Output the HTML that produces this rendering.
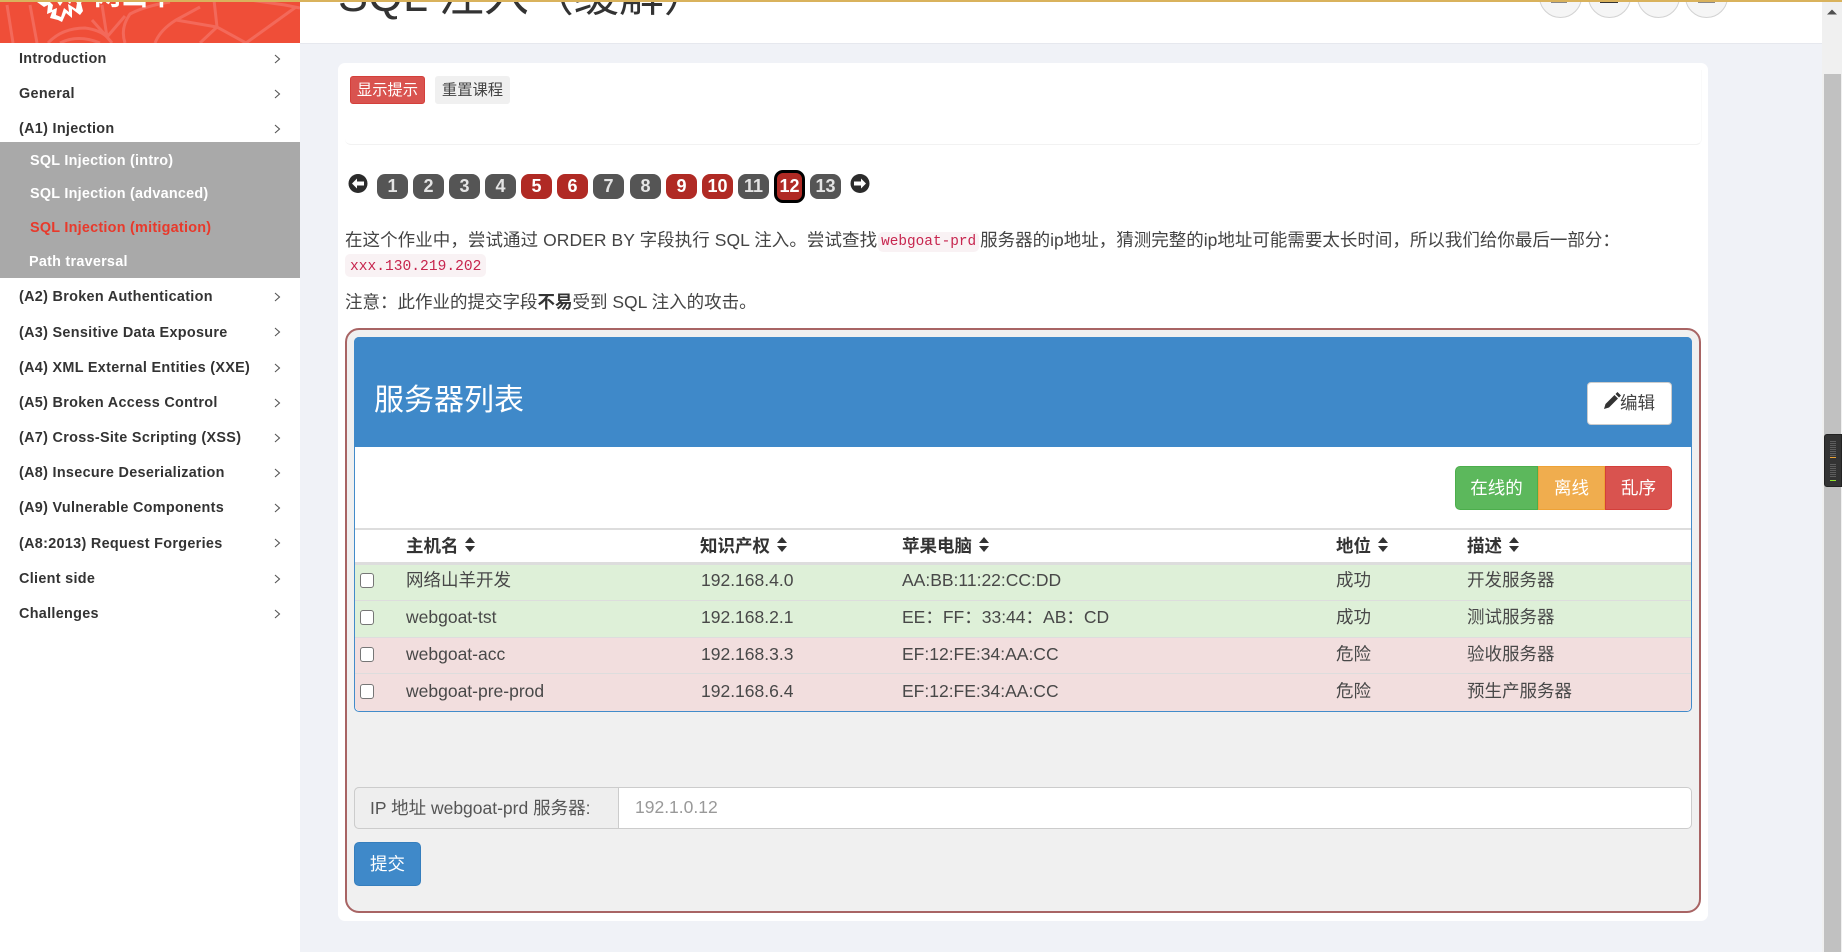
<!DOCTYPE html>
<html lang="zh"><head><meta charset="utf-8"><title>SQL 注入（缓解）</title>
<style>
*{box-sizing:border-box}
html,body{margin:0;padding:0;width:1842px;height:952px;overflow:hidden;background:#f0f2f7;font-family:"Liberation Sans","Noto Sans CJK SC",sans-serif;color:#444;font-size:17.5px}
.a{position:absolute;white-space:nowrap}
.nav{position:absolute;left:19px;margin-top:.5px;font-size:14.4px;font-weight:bold;color:#333;line-height:20px;white-space:nowrap;letter-spacing:.31px}
.sub{position:absolute;margin-top:.5px;font-size:14.4px;font-weight:bold;color:#fff;line-height:20px;white-space:nowrap;letter-spacing:.25px}
.pg{position:absolute;top:174px;width:31px;height:25px;border-radius:8px;background:#555;color:#e4e4e4;font:bold 18px/25px "Liberation Sans",sans-serif;text-align:center}
.pg.r{background:#b02a24;color:#fff}
.circ{position:absolute;top:-25px;width:43px;height:43px;border-radius:50%;background:#f5f5f5;border:1.5px solid #d2d2d2}
code{font-family:"Liberation Mono",monospace;font-size:14.4px;color:#c7254e;background:#f9f2f4;border-radius:5px}
.row{position:absolute;left:355px;width:1336px;height:37px;border-bottom:1px solid #ddd}
.c{position:absolute;line-height:36px;white-space:nowrap;color:#484848}
.th{position:absolute;top:530px;line-height:32px;font-weight:bold;color:#333;white-space:nowrap}
.cb{position:absolute;left:360px;width:14px;height:15px;border:1px solid #767676;border-radius:3px;background:#fff}
.btn{position:absolute;color:#fff;text-align:center;font-size:17.5px}
</style></head>
<body>
<!-- header -->
<div class="a" style="left:0;top:0;width:1842px;height:44px;background:#fff;border-bottom:1px solid #e6e8ee"></div>
<div class="a" style="left:338px;top:-34px;font-size:45px;line-height:60px;color:#333">SQL 注入（缓解）</div>
<div class="circ" style="left:1539px"></div>
<div class="circ" style="left:1588px"></div>
<div class="circ" style="left:1637px"></div>
<div class="circ" style="left:1685px"></div>
<div class="a" style="left:1551px;top:0;width:16px;height:3px;background:#888"></div>
<div class="a" style="left:1600px;top:0;width:18px;height:3px;border:1px solid #333;border-top:0;background:#fff"></div>
<div class="a" style="left:1655px;top:0;width:6px;height:2px;background:#888"></div>
<div class="a" style="left:1698px;top:0;width:17px;height:3px;background:#888"></div>

<!-- logo -->
<svg class="a" style="left:0;top:0" width="300" height="43" viewBox="0 0 300 43">
<rect width="300" height="43" fill="#ef4e38"/>
<g fill="none" stroke="#f3695a" stroke-width="3">
<path d="M7 5 L13 43M30 5 L37 43"/>
<path d="M102 5 L107 37M107 37 L92 20M107 37 L125 16M107 37 L112 43"/>
<path d="M48 43 Q62 28 85 28 Q100 30 107 37M60 43 Q78 34 100 43M125 43 Q120 28 130 14 Q145 6 170 2M155 43 Q160 30 176 20 L200 7"/>
<path d="M176 20 L217 27 L246 43M217 27 L200 43M217 27 L214 0M246 43 L296 7"/>
<path d="M250 0 L285 5 L300 8"/>
</g>
<path d="M37 2 L44 7 L48 5 L47 14 L52 12 L50 18 L58 20 L62 22 L66 13 L72 18 L72 9 L80 15 L83 11 L81 3 L83 0 L37 0 Z" fill="#fff"/>
<path d="M48 0 L53 5 L52 10 L57 8 L56 15 L61 17 L64 8 L69 12 L68 4 L76 9 L77 3 L74 0 Z" fill="#ef4e38"/>
<path d="M56 0 L60 6 L64 0 Z M66 0 L70 4 L72 0 Z" fill="#fff"/>
<text x="94" y="5" font-size="27" font-weight="bold" fill="#fff" font-family="Liberation Sans,Noto Sans CJK SC,sans-serif">网山羊</text>
</svg>
<div class="a" style="left:0;top:0;width:1842px;height:1.5px;background:#d9b25c;z-index:5"></div>

<!-- sidebar -->
<div class="a" style="left:0;top:43px;width:300px;height:909px;background:#fff"></div>
<div class="a" style="left:0;top:142px;width:300px;height:136px;background:#a9a9a9"></div>
<div class="nav" style="top:48px">Introduction</div>
<div class="nav" style="top:83px">General</div>
<div class="nav" style="top:118px">(A1) Injection</div>
<div class="sub" style="left:30px;top:150px">SQL Injection (intro)</div>
<div class="sub" style="left:30px;top:183px">SQL Injection (advanced)</div>
<div class="sub" style="left:30px;top:217px;color:#e8392b">SQL Injection (mitigation)</div>
<div class="sub" style="left:29px;top:251px">Path traversal</div>
<div class="nav" style="top:286px">(A2) Broken Authentication</div>
<div class="nav" style="top:322px">(A3) Sensitive Data Exposure</div>
<div class="nav" style="top:357px">(A4) XML External Entities (XXE)</div>
<div class="nav" style="top:392px">(A5) Broken Access Control</div>
<div class="nav" style="top:427px">(A7) Cross-Site Scripting (XSS)</div>
<div class="nav" style="top:462px">(A8) Insecure Deserialization</div>
<div class="nav" style="top:497px">(A9) Vulnerable Components</div>
<div class="nav" style="top:533px">(A8:2013) Request Forgeries</div>
<div class="nav" style="top:568px">Client side</div>
<div class="nav" style="top:603px">Challenges</div>
<svg class="a" style="left:0;top:0" width="300" height="640" fill="none" stroke="#555" stroke-width="1.1">
<path d="M275 55l4.500 4-4.500 4M275 90l4.500 4-4.500 4M275 125l4.500 4-4.500 4M275 293l4.500 4-4.500 4M275 328l4.500 4-4.500 4M275 364l4.500 4-4.500 4M275 399l4.500 4-4.500 4M275 434l4.500 4-4.500 4M275 469l4.500 4-4.500 4M275 504l4.500 4-4.500 4M275 539l4.500 4-4.500 4M275 575l4.500 4-4.500 4M275 610l4.500 4-4.500 4"/>
</svg>

<!-- card -->
<div class="a" style="left:338px;top:63px;width:1370px;height:858px;background:#fff;border-radius:7px"></div>
<div class="a" style="left:345px;top:70px;width:1357px;height:75px;border-bottom:1px solid #f2f2f2;border-right:1px solid #fafafa;border-radius:0 0 6px 6px"></div>
<div class="btn" style="left:350px;top:76px;width:75px;height:28px;background:#d9534f;border:1px solid #d43f3a;border-radius:3px;font-size:15.300px;line-height:28px">显示提示</div>
<div class="btn" style="left:435px;top:76px;width:75px;height:28px;background:#f0f0f0;border-radius:3px;font-size:15.300px;line-height:30px;color:#444">重置课程</div>

<!-- pagination -->
<svg class="a" style="left:347px;top:173px" width="22" height="21" viewBox="0 0 22 21"><circle cx="11" cy="10.500" r="9.500" fill="#2b2b2b"/><path d="M5 10.500l5-5v3h7v4h-7v3z" fill="#fff"/></svg>
<div class="pg" style="left:377px">1</div><div class="pg" style="left:413px">2</div><div class="pg" style="left:449px">3</div><div class="pg" style="left:485px">4</div>
<div class="pg r" style="left:521px">5</div><div class="pg r" style="left:557px">6</div><div class="pg" style="left:593px">7</div><div class="pg" style="left:630px">8</div>
<div class="pg r" style="left:666px">9</div><div class="pg r" style="left:702px">10</div><div class="pg" style="left:738px">11</div>
<div class="pg r" style="left:774px;top:170px;height:33px;border:3px solid #000;width:31px;line-height:27px;border-radius:9px">12</div>
<div class="pg" style="left:810px">13</div>
<svg class="a" style="left:849px;top:173px" width="22" height="21" viewBox="0 0 22 21"><circle cx="11" cy="10.500" r="9.500" fill="#2b2b2b"/><path d="M17 10.500l-5-5v3H5v4h7v3z" fill="#fff"/></svg>

<!-- text -->
<div class="a" style="left:345px;top:228px;line-height:24px;font-size:17.500px"><span style="letter-spacing:.06px">在这个作业中，尝试通过 ORDER BY 字段执行 SQL 注入。尝试查找</span><code style="padding:2px 3px;margin:0 1px;position:relative;top:-1px">webgoat-prd</code>服务器的ip地址，猜测完整的ip地址可能需要太长时间，所以我们给你最后一部分：</div>
<div class="a" style="left:345px;top:254px;height:23px"><code style="display:block;padding:0 5px;height:23px;line-height:26px;font-size:14.600px">xxx.130.219.202</code></div>
<div class="a" style="left:345px;top:290px;line-height:24px;font-size:17.500px">注意：此作业的提交字段<b style="color:#333">不易</b>受到 SQL 注入的攻击。</div>

<!-- attack container -->
<div class="a" style="left:345px;top:328px;width:1356px;height:585px;background:#f0f0f0;border:2px solid #a86464;border-radius:14px"></div>
<div class="a" style="left:354px;top:337px;width:1338px;height:375px;background:#fff;border:1px solid #428bca;border-radius:5px"></div>
<div class="a" style="left:354px;top:337px;width:1338px;height:110px;background:#3f89c9;border-radius:5px 5px 0 0"></div>
<div class="a" style="left:374px;top:380px;font-size:30px;line-height:42px;color:#fff">服务器列表</div>
<div class="btn" style="left:1587px;top:382px;width:85px;height:43px;background:#fff;border:1px solid #ccc;border-radius:4px;color:#444;line-height:41px;text-align:left;padding-left:32px">编辑</div>
<svg class="a" style="left:1603px;top:391px" width="20" height="20" viewBox="0 0 20 20"><path d="M1 18l1.500-5 9-9 3.500 3.500-9 9zM12.500 3l2-2 3.500 3.500-2 2z" fill="#333"/></svg>
<div class="btn" style="left:1455px;top:466px;width:83px;height:44px;background:#5cb85c;border:1px solid #4cae4c;border-radius:5px 0 0 5px;line-height:42px">在线的</div>
<div class="btn" style="left:1538px;top:466px;width:67px;height:44px;background:#f0ad4e;border:1px solid #eea236;line-height:42px">离线</div>
<div class="btn" style="left:1605px;top:466px;width:67px;height:44px;background:#d9534f;border:1px solid #d43f3a;border-radius:0 5px 5px 0;line-height:42px">乱序</div>

<!-- table -->
<div class="a" style="left:355px;top:528px;width:1336px;height:2px;background:#ddd"></div>
<div class="a" style="left:355px;top:562px;width:1336px;height:3px;background:#ddd"></div>
<div class="th" style="left:406px">主机名</div>
<div class="th" style="left:700px">知识产权</div>
<div class="th" style="left:902px">苹果电脑</div>
<div class="th" style="left:1336px">地位</div>
<div class="th" style="left:1467px">描述</div>
<svg class="a" style="left:0;top:530px" width="1700" height="32" fill="#333">
<path d="M470 7l5 6h-10zM470 22l5-6h-10z"/>
<path d="M782 7l5 6h-10zM782 22l5-6h-10z"/>
<path d="M984 7l5 6h-10zM984 22l5-6h-10z"/>
<path d="M1383 7l5 6h-10zM1383 22l5-6h-10z"/>
<path d="M1514 7l5 6h-10zM1514 22l5-6h-10z"/>
</svg>

<div class="row" style="top:565px;height:36px;background:#def0d8"></div>
<div class="row" style="top:601px;background:#def0d8"></div>
<div class="row" style="top:638px;background:#f2dede;height:36px"></div>
<div class="row" style="top:674px;background:#f2dede;border:0;height:37px;border-radius:0 0 5px 5px"></div>

<div class="cb" style="top:573px"></div><div class="cb" style="top:610px"></div><div class="cb" style="top:647px"></div><div class="cb" style="top:684px"></div>
<div class="c" style="left:406px;top:562px">网络山羊开发</div><div class="c" style="left:701px;top:562px">192.168.4.0</div><div class="c" style="left:902px;top:562px">AA:BB:11:22:CC:DD</div><div class="c" style="left:1336px;top:562px">成功</div><div class="c" style="left:1467px;top:562px">开发服务器</div>
<div class="c" style="left:406px;top:599px">webgoat-tst</div><div class="c" style="left:701px;top:599px">192.168.2.1</div><div class="c" style="left:902px;top:599px">EE：FF：33:44：AB：CD</div><div class="c" style="left:1336px;top:599px">成功</div><div class="c" style="left:1467px;top:599px">测试服务器</div>
<div class="c" style="left:406px;top:636px">webgoat-acc</div><div class="c" style="left:701px;top:636px">192.168.3.3</div><div class="c" style="left:902px;top:636px">EF:12:FE:34:AA:CC</div><div class="c" style="left:1336px;top:636px">危险</div><div class="c" style="left:1467px;top:636px">验收服务器</div>
<div class="c" style="left:406px;top:673px">webgoat-pre-prod</div><div class="c" style="left:701px;top:673px">192.168.6.4</div><div class="c" style="left:902px;top:673px">EF:12:FE:34:AA:CC</div><div class="c" style="left:1336px;top:673px">危险</div><div class="c" style="left:1467px;top:673px">预生产服务器</div>

<!-- form -->
<div class="a" style="left:354px;top:787px;width:1338px;height:42px;background:#fff;border:1px solid #ccc;border-radius:5px"></div>
<div class="a" style="left:354px;top:787px;width:265px;height:42px;background:#eee;border:1px solid #ccc;border-radius:5px 0 0 5px;line-height:40px;padding-left:15px;color:#555">IP 地址 webgoat-prd 服务器:</div>
<div class="a" style="left:635px;top:787px;line-height:40px;color:#999">192.1.0.12</div>
<div class="btn" style="left:354px;top:842px;width:67px;height:44px;background:#3f89c9;border:1px solid #357ebd;border-radius:5px;line-height:42px">提交</div>

<!-- scrollbar -->
<div class="a" style="left:1822px;top:0;width:20px;height:952px;background:#f0f0f0"></div>
<div class="a" style="left:1824px;top:74px;width:17px;height:878px;background:#c1c1c1"></div>
<svg class="a" style="left:1822px;top:6px" width="20" height="12"><path d="M10 3.500l5 5h-10z" fill="#505050"/></svg>
<div class="a" style="left:1824px;top:434px;width:18px;height:53px;background:#333;border-radius:3px 0 0 3px;border:1px solid #222"></div>
<svg class="a" style="left:1830px;top:440px" width="7" height="44">
<g stroke="#5e5e5e" stroke-width="1"><path d="M0 1.500h6M0 3.500h6M0 5.500h6M0 7.500h6M0 9.500h6M0 11.500h6M0 13.500h6M0 15.500h6M0 24.500h6M0 26.500h6M0 28.500h6M0 30.500h6M0 32.500h6M0 34.500h6M0 36.500h6"/></g>
<path d="M0 17.500h6" stroke="#e8a33a"/><path d="M0 40.500h6" stroke="#8fe22e"/>
</svg>
</body></html>
